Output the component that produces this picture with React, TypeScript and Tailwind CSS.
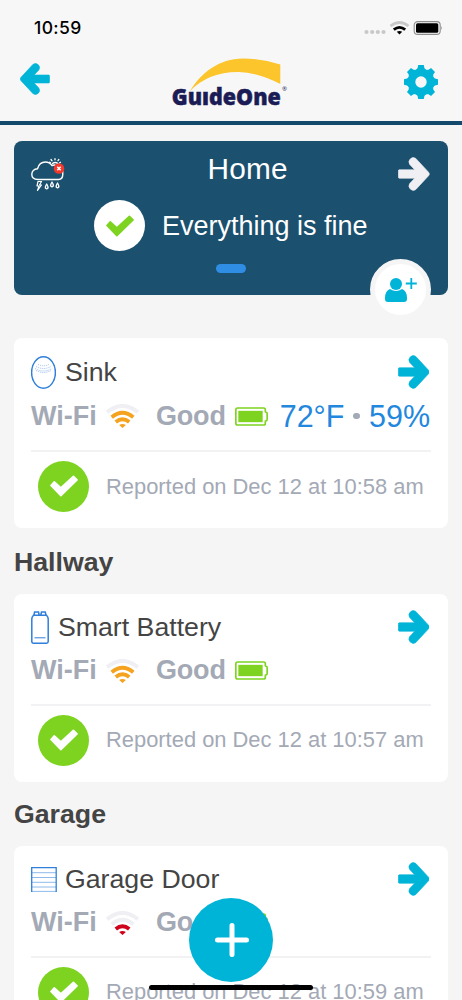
interface Device {
  name: string;
  icon: "leak" | "battery" | "garage";
  signal: number;
  color: string;
  reading?: { temp: string; humidity: string };
  time: string;
}

const sink: Device = {
  name: "Sink",
  icon: "leak",
  signal: 3,
  color: "#f5a21f",
  reading: { temp: "72°F", humidity: "59%" },
  time: "10:58",
};

const battery: Device = {
  name: "Smart Battery",
  icon: "battery",
  signal: 3,
  color: "#f5a21f",
  time: "10:57",
};

const garage: Device = {
  name: "Garage Door",
  icon: "garage",
  signal: 2,
  color: "#d0021b",
  time: "10:59",
};

const Arrow = ({ className = "" }: { className?: string }) => (
  <svg viewBox="0 0 94 101" className={`shrink-0 ${className}`} fill="currentColor" stroke="currentColor" strokeWidth="2" strokeLinejoin="round">
    <path d="M4 38H50L35 22A13 13 0 0 1 53 4L91 45Q96 50.5 91 56L53 97A13 13 0 0 1 35 79L50 63H4Q1 63 1 59V42Q1 38 4 38Z" />
  </svg>
);

const Check = () => (
  <svg viewBox="0 0 85 65" className="w-[28px] h-[22px]" fill="currentColor" stroke="currentColor" strokeWidth="5" strokeLinejoin="round">
    <path d="M3 31L13 20L33 38L71 3L82 14L33 62Z" />
  </svg>
);

const Gear = () => (
  <svg viewBox="-17 -17 34 34" className="w-[34px] h-[34px]" fill="#00b4d8">
    {[0, 45, 90, 135, 180, 225, 270, 315].map((a) => (
      <path key={a} d="M-6 -11L-3.4 -14L-2.8 -17H2.8L3.4 -14L6 -11Z" transform={`rotate(${a})`} />
    ))}
    <circle r="13.3" />
    <circle r="5.7" fill="#f7f7f7" />
  </svg>
);

const Logo = () => (
  <svg viewBox="0 0 118 52" className="w-[118px] h-[52px]">
    <path d="M19 35C30 17 48 2.500 72 2.500Q91 2.500 109.300 8.500V28Q87 16.500 68 16Q38 15.500 19 35Z" fill="#fcc52c" />
    <text x="0.800" y="48.500" fontFamily="'Open Sans', sans-serif" fontWeight="800" fontSize="22.500" textLength="109" lengthAdjust="spacingAndGlyphs" fill="#1b1c55" stroke="#1b1c55" strokeWidth="0.500">
      GuıdeOne
    </text>
    <text x="111" y="35" fontFamily="'Open Sans', sans-serif" fontSize="6" fill="#1b1c55">®</text>
  </svg>
);

const Weather = () => (
  <svg viewBox="0 0 34 34" className="w-[34px] h-[34px]" fill="none" stroke="#fff" strokeWidth="1.400" strokeLinecap="round" strokeLinejoin="round">
    <path d="M7 21.500C2.500 21.500 0.800 19 0.800 16.500C0.800 13.500 3 11 6.500 10.800C7.500 7 10.500 4 14.500 4C17.500 4 19.500 5.500 21 7.500C23 6.500 25 7 26.500 8.500C30 9 32 12 31.800 16C31.800 19.500 30 21.500 27.500 21.500Z" />
    <path d="M19.500 4.800L18.500 4.200M21 2.800L20 1.500M24 1.800V0.700M27 2.600L27.800 1.500M28.500 5L29.500 4.300M21.500 5.500Q24 3.500 27 5.500" strokeWidth="1.300" />
    <path d="M7 23.500L6 28H8L6.500 32.500L10.500 27H8.500L10.500 23.500Z" strokeWidth="1.200" />
    <path d="M15.700 26Q13.700 29.200 14.600 30.200Q15.700 31.500 16.800 30.200Q17.700 29.200 15.700 26ZM21 24Q19 27.200 19.900 28.200Q21 29.500 22.100 28.200Q23 27.200 21 24ZM26.500 25Q24.500 28.200 25.400 29.200Q26.500 30.500 27.600 29.200Q28.500 28.200 26.500 25Z" strokeWidth="1.300" />
    <circle cx="28" cy="10.500" r="5.300" fill="#f5382c" stroke="none" />
    <path d="M26.300 8.800L29.700 12.200M29.700 8.800L26.300 12.200" strokeWidth="1.500" strokeLinecap="butt" />
  </svg>
);

const Wifi = ({ level, color }: { level: number; color: string }) => (
  <svg viewBox="0 0 98 71" className="w-[33px] h-[24px]" fill="none" strokeWidth="11.500">
    <path d="M3 24Q49 -13 95 24" stroke="#efeff4" />
    <path d="M17 39Q49 13 81 39" stroke={level > 2 ? color : "#efeff4"} />
    <path d="M29 53Q49 37 69 53" stroke={color} />
    <path d="M39 62Q49 56 59 62L49 71Z" fill={color} />
  </svg>
);

const Charge = () => (
  <svg viewBox="0 0 99 56" className="w-[33px] h-[19px]" fill="none" stroke="#7ed321" strokeWidth="5" strokeLinejoin="round">
    <path d="M8 2.500H86Q91 2.500 91 8V14Q96.500 15 96.500 19V37Q96.500 41 91 42V48Q91 53.500 86 53.500H8Q2.500 53.500 2.500 48V8Q2.500 2.500 8 2.500Z" />
    <path d="M10 11H83V45H10Z" fill="#7ed321" stroke="none" />
  </svg>
);

const DeviceIcon = ({ type }: { type: Device["icon"] }) => {
  if (type === "leak") {
    return (
      <svg viewBox="0 0 25 33" className="w-[25px] h-[33px] mr-[9px]" fill="none" stroke="#2f7fdb">
        <ellipse cx="12.500" cy="16.500" rx="11.900" ry="15.700" strokeWidth="1.500" />
        <path d="M7 8.500Q12.500 11 18 8.500M5 10.500Q12.500 14.500 20 10.500M4 12.500Q12.500 17.500 21 12.500M5 14.500Q12.500 18.500 20 14.500" strokeWidth="0.700" strokeDasharray="1 1" opacity="0.700" />
      </svg>
    );
  }
  if (type === "battery") {
    return (
      <svg viewBox="0 0 18 33" className="w-[18px] h-[33px] mr-[9px]" fill="none" stroke="#2f7fdb" strokeWidth="1.500">
        <path d="M2.500 4.200H15.500Q17.200 6 17.200 8V30.500Q17.200 32.200 15.500 32.200H2.500Q0.800 32.200 0.800 30.500V8Q0.800 6 2.500 4.200ZM3 4L3.600 1H7.500L8.200 4M9.800 4L10.500 1H14.200L15 4" />
        <path d="M3.500 26.800H14.500" strokeWidth="1" />
      </svg>
    );
  }
  return (
    <svg viewBox="0 0 26 25" className="w-[26px] h-[25px] mr-[8px]" fill="none" stroke="#2f7fdb">
      <path d="M0.700 25V0.700H25.200V25" strokeWidth="1.300" />
      <path d="M1 5.700H25M1 10.500H25M1 15.300H25M1 20H25M1 24.400H25" strokeWidth="0.900" opacity="0.600" />
    </svg>
  );
};

const DeviceCard = ({ device }: { device: Device }) => (
  <div className={`bg-white rounded-lg px-[17px] shrink-0 ${device.reading ? "h-[190px]" : "h-[188px]"}`}>
    <div className={`h-[58px] flex items-center text-[#444] ${device.reading ? "pt-[11px]" : "pt-[9px]"}`}>
      <DeviceIcon type={device.icon} />
      <span className="text-[26.7px] leading-none grow">{device.name}</span>
      <Arrow className="w-[31.500px] h-[34px] text-[#00b4d8] mr-[2px] -mt-[1px]" />
    </div>
    <div className={`flex items-center border-b-2 border-[#f2f2f4] text-[#a3a9b5] whitespace-nowrap ${device.reading ? "h-[56px] pb-[14px]" : "h-[54px] pb-[15px]"}`}>
      <span className="text-[27px] font-bold leading-none w-[75px]">Wi-Fi</span>
      <Wifi level={device.signal} color={device.color} />
      <span className="text-[27px] font-bold leading-none tracking-[-0.200px] w-[79px] ml-[17px]">Good</span>
      <Charge />
      {device.reading && (
        <div className="grow flex items-center justify-end pr-px text-[30.500px] leading-none text-[#2287dd]">
          <span>{device.reading.temp}</span>
          <span className="w-[6.500px] h-[6.500px] rounded-full bg-[#a3a9b5] mx-[9px]" />
          <span>{device.reading.humidity}</span>
        </div>
      )}
    </div>
    <div className="flex items-center pl-[7px] pt-[8.500px]">
      <div className="w-[51px] h-[51px] rounded-full bg-[#7ed321] text-white flex items-center justify-center">
        <Check />
      </div>
      <span className={`ml-[17px] text-[21.900px] leading-none text-[#a3a9b5] whitespace-nowrap ${device.reading ? "mt-[2px]" : ""}`}>
        Reported on Dec 12 at {device.time} am
      </span>
    </div>
  </div>
);

const StatusBar = () => (
  <div className="h-[56px] pl-[34px] pr-[19px] flex items-center justify-between text-black">
    <span className="font-['Inter',sans-serif] font-medium text-[17.500px] tracking-[0.400px] leading-none">10:59</span>
    <svg viewBox="0 0 80 14" className="w-[80px] h-[14px]">
      <g fill="#c8c8ca">
        <circle cx="3.500" cy="11" r="2.100" />
        <circle cx="9.200" cy="11" r="2.100" />
        <circle cx="14.800" cy="11" r="2.100" />
        <circle cx="20.500" cy="11" r="2.100" />
      </g>
      <g fill="none" strokeWidth="2.800">
        <path d="M27.500 5Q36.500 -2 45.500 5" stroke="#c8c8ca" />
        <path d="M30.800 8.700Q36.500 4 42.200 8.700" stroke="#000" />
      </g>
      <path d="M33.800 10.800Q36.500 9 39.200 10.800L36.500 13.400Z" />
      <rect x="51.200" y="0.600" width="26" height="12.800" rx="3.500" fill="none" stroke="#8e8e90" strokeWidth="1.100" />
      <rect x="53" y="2.300" width="22.300" height="9.400" rx="1.500" />
      <path d="M78.300 5Q80 7 78.300 9Z" fill="#8e8e90" />
    </svg>
  </div>
);

export default function App() {
  return (
    <div className="relative w-[462px] h-[1000px] overflow-hidden bg-[#f5f5f5] flex flex-col font-['Liberation_Sans',Arial,sans-serif]">
      {/* Header */}
      <header className="h-[125px] shrink-0 bg-[#f7f7f7] border-b-4 border-[#13496a]">
        <StatusBar />
        <div className="flex items-start justify-between pl-[20px] pr-[24px]">
          <Arrow className="w-[30px] h-[32px] text-[#00b4d8] rotate-180 mt-[7px]" />
          <div className="ml-[6px]">
            <Logo />
          </div>
          <div className="mt-[9px]">
            <Gear />
          </div>
        </div>
      </header>

      <main className="px-[14px] pt-[16px] flex flex-col">
        {/* Home summary */}
        <section className="relative h-[154px] shrink-0 rounded-lg bg-[#1b506e] text-white flex flex-col">
          <div className="h-[59px] pt-[8px] pl-[17px] pr-[18px] flex items-center justify-between">
            <div>
              <Weather />
            </div>
            <span className="text-[29.800px] leading-none -mt-[12px] ml-[32px] tracking-[0.200px]">Home</span>
            <Arrow className="w-[31.500px] h-[34px] text-[#efeff4] -mt-[1px]" />
          </div>
          <div className="flex items-center pl-[80px]">
            <div className="w-[51px] h-[51px] rounded-full bg-white text-[#7ed321] flex items-center justify-center">
              <Check />
            </div>
            <span className="ml-[17px] mt-[2px] text-[27px] leading-none">Everything is fine</span>
          </div>
          <div className="mt-[13px] mx-auto w-[30px] h-[9px] rounded-full bg-[#2f8de4]" />
          <div className="absolute right-[17px] top-[118px] w-[61px] h-[61px] rounded-full bg-white border-[5px] border-[#f5f5f6] flex items-center justify-center">
            <svg viewBox="0 0 32 24" className="w-[32px] h-[24px] ml-px" fill="#00b4d8">
              <circle cx="11" cy="6" r="6" />
              <path d="M5 11Q11 15 17 11Q22 13 22 20V21Q22 24 19 24H3Q0 24 0 21V20Q0 13 5 11Z" />
              <path d="M25.400 0H27.200V4.600H31.800V6.400H27.200V11H25.400V6.400H20.800V4.600H25.400Z" />
            </svg>
          </div>
        </section>

        <div className="mt-[43px] flex flex-col">
          <DeviceCard device={sink} />
          <h2 className="h-[66px] pt-[21px] shrink-0 text-[26.700px] font-bold leading-none text-[#444]">Hallway</h2>
          <DeviceCard device={battery} />
          <h2 className="h-[64px] pt-[19px] shrink-0 text-[26.700px] font-bold leading-none text-[#444]">Garage</h2>
          <DeviceCard device={garage} />
        </div>
      </main>

      {/* Add device */}
      <button className="absolute left-[189px] top-[898px] w-[84px] h-[84px] rounded-full bg-[#00b4d8] flex items-center justify-center">
        <svg viewBox="0 0 34 34" className="w-[34px] h-[34px] ml-px" stroke="#fff" strokeWidth="5" strokeLinecap="round">
          <path d="M17 2.500V31.500M2.500 17H31.500" />
        </svg>
      </button>

      {/* Home indicator */}
      <div className="absolute left-[149px] top-[985px] w-[164px] h-[5px] rounded-full bg-black" />
    </div>
  );
}
